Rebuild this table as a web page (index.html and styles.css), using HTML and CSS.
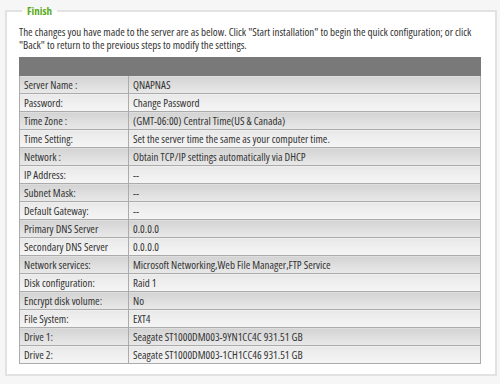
FILE: index.html
```html
<!DOCTYPE html>
<html>
<head>
<meta charset="utf-8">
<link rel="stylesheet" href="styles.css">
</head>
<body>
<fieldset class="panel">
  <legend class="panel-title">Finish</legend>
  <p class="intro">The changes you have made to the server are as below. Click "Start installation" to begin the quick configuration; or click<br>"Back" to return to the previous steps to modify the settings.</p>
  <table class="summary">
    <thead>
      <tr class="head"><th colspan="2"></th></tr>
    </thead>
    <tbody>
      <tr class="odd"><td class="label">Server Name :</td><td>QNAPNAS</td></tr>
      <tr class="even"><td class="label">Password:</td><td>Change Password</td></tr>
      <tr class="odd"><td class="label">Time Zone :</td><td>(GMT-06:00) Central Time(US &amp; Canada)</td></tr>
      <tr class="even"><td class="label">Time Setting:</td><td>Set the server time the same as your computer time.</td></tr>
      <tr class="odd"><td class="label">Network :</td><td>Obtain TCP/IP settings automatically via DHCP</td></tr>
      <tr class="even"><td class="label">IP Address:</td><td>--</td></tr>
      <tr class="odd"><td class="label">Subnet Mask:</td><td>--</td></tr>
      <tr class="even"><td class="label">Default Gateway:</td><td>--</td></tr>
      <tr class="odd"><td class="label">Primary DNS Server</td><td>0.0.0.0</td></tr>
      <tr class="even"><td class="label">Secondary DNS Server</td><td>0.0.0.0</td></tr>
      <tr class="odd"><td class="label">Network services:</td><td>Microsoft Networking,Web File Manager,FTP Service</td></tr>
      <tr class="even"><td class="label">Disk configuration:</td><td>Raid 1</td></tr>
      <tr class="odd"><td class="label">Encrypt disk volume:</td><td>No</td></tr>
      <tr class="even"><td class="label">File System:</td><td>EXT4</td></tr>
      <tr class="odd"><td class="label">Drive 1:</td><td>Seagate ST1000DM003-9YN1CC4C 931.51 GB</td></tr>
      <tr class="even"><td class="label">Drive 2:</td><td>Seagate ST1000DM003-1CH1CC46 931.51 GB</td></tr>
    </tbody>
  </table>
</fieldset>
</body>
</html>
```
FILE: styles.css
```css
html, body {
  margin: 0;
  padding: 0;
  background: #f6f6f6;
}
body {
  font-family: "Open Sans", "Liberation Sans", Arial, sans-serif;
  font-stretch: 75%;
  font-size: 11px;
  color: #333;
}
.panel {
  margin: 4px 7px 0 5px;
  padding: 8px 10px 10px 12px;
  border: 2px solid #e2e2e2;
  background: #fff;
  width: 466px;
  box-sizing: content-box;
}
.panel-title {
  color: #5aaa1c;
  font-weight: bold;
  font-size: 11px;
  padding: 0 5px;
  margin-left: 3px;
  line-height: 13px;
}
.intro {
  margin: 0 0 6px 0;
  line-height: 13px;
}
.summary {
  width: 462px;
  border-collapse: collapse;
  border: 1px solid #9a9a9a;
}
.summary tr {
  height: 18px;
}
.summary th, .summary td {
  padding: 0 4px;
  border: 1px solid #ababab;
  text-align: left;
  font-weight: normal;
  line-height: 13px;
  white-space: nowrap;
}
.head th {
  background: #797979;
  border-color: #797979;
}
.summary td.label {
  width: 100px;
}
.odd td {
  background: linear-gradient(#d3d3d3, #e9e9e9);
}
.even td {
  background: linear-gradient(#e9e9e9, #f5f5f5);
}
```
